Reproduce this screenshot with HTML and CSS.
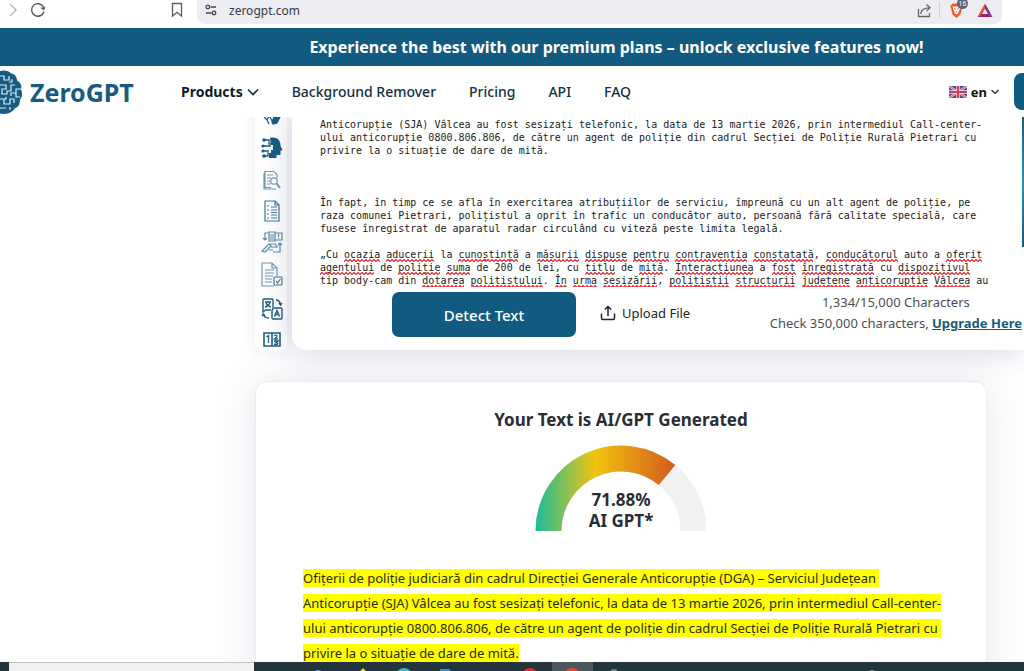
FILE: index.html
```html
<!DOCTYPE html>
<html lang="ro">
<head>
  <meta charset="utf-8">
  <title>ZeroGPT</title>
  <link rel="stylesheet" href="styles.css">
</head>
<body>
  <!-- browser toolbar -->
  <div class="toolbar">
    <button class="icon-btn forward" aria-label="Forward">
      <svg width="10" height="16" viewBox="0 0 10 16"><path d="M2 2l6 6-6 6" fill="none" stroke="#b5b5ba" stroke-width="1.4"/></svg>
    </button>
    <button class="icon-btn reload" aria-label="Reload">
      <svg width="16" height="16" viewBox="0 0 16 16"><path d="M13.500 5A6.300 6.300 0 1 0 14 9.500" fill="none" stroke="#5b5b60" stroke-width="1.4"/><path d="M15.500 4.500l-1.500 4-3.500-2.500z" fill="#5b5b60"/></svg>
    </button>
    <button class="icon-btn bookmark" aria-label="Bookmark">
      <svg width="12" height="16" viewBox="0 0 12 16"><path d="M1.500 1.500h9v12.500L6 10.300 1.500 14z" fill="none" stroke="#5b5b60" stroke-width="1.3"/></svg>
    </button>
    <div class="address">
      <svg width="12" height="12" viewBox="0 0 12 12" fill="none" stroke="#444449" stroke-width="1.3"><circle cx="2.800" cy="3" r="1.800"/><path d="M5.500 3H11M1 9h5.500"/><circle cx="9" cy="9" r="1.800"/></svg>
      <span class="url">zerogpt.com</span>
      <button class="icon-btn" aria-label="Share">
        <svg width="15" height="15" viewBox="0 0 15 15" fill="none" stroke="#66666d" stroke-width="1.3"><path d="M1.500 6v7.500h11V10M3.800 11c.2-4 3-6.200 8.700-6.200M9.500 1.500l3.500 3.300-3.500 3.300"/></svg>
      </button>
      <span class="divider"></span>
      <button class="icon-btn shield" aria-label="Shields">
        <svg width="19" height="18" viewBox="0 0 19 18"><path d="M3.500 2.500h8l2.200 2.700-.7 1.800-1.500 6.500-4 3.500-4-3.500L2 7l-.7-1.800z" fill="#ef5a29"/><path d="M3.500 5.500l2 .3 2-.5 2 .5 2-.3-1 3.500-1 1.500.3 1.300-2.300 1.700-2.300-1.700.3-1.300-1-1.500z" fill="#fff"/><path d="M5 7.500l2 .8M10 7.500l-2 .8M6.500 11h2" stroke="#ef5a29" stroke-width=".8"/></svg>
        <span class="badge">16</span>
      </button>
      <button class="icon-btn" aria-label="Rewards">
        <svg width="16" height="15" viewBox="0 0 16 15"><path d="M8 .5L.5 14 5 11l3-5.500z" fill="#e8462f"/><path d="M8 .5L15.500 14 11 11 8 5.500z" fill="#7d2d86"/><path d="M.5 14h15L11 11H5z" fill="#9c1f6b"/></svg>
      </button>
    </div>
  </div>

  <div class="promo">Experience the best with our premium plans – unlock exclusive features now!</div>

  <header class="header">
    <a class="logo" href="#">
      <svg width="23" height="44" viewBox="0 0 23 44"><path d="M0 1c5-1.500 9 0 11 2.500 4 0 6 4 6 7 4 2 5 6 4 9 2 4 1 8-1 10 0 5-2 8-5 8.500-2 4-8 7-15 5.500z" fill="#175c80"/><path d="M0 6h4v4h5V6M0 15h6v4H2v5h5v-3h4v-6h4M0 29h6v-2M4 29v5h6v-5h4v4M0 38h6M12 9v3h-3M21 19h-5v4h-5v3M16 23v4h4M10 37v3" fill="none" stroke="#d9edf6" stroke-width="1.200"/></svg>
      <span>ZeroGPT</span>
    </a>
    <nav class="nav">
      <a href="#" class="products">Products
        <svg width="12" height="8" viewBox="0 0 12 8"><path d="M1 1.500l5 5 5-5" fill="none" stroke="#12303f" stroke-width="1.600"/></svg>
      </a>
      <a href="#">Background Remover</a>
      <a href="#">Pricing</a>
      <a href="#">API</a>
      <a href="#">FAQ</a>
    </nav>
    <button class="lang">
      <svg class="flag" width="18" height="12" viewBox="0 0 18 12"><path d="M0 0h18v12H0z" fill="#4b4f9a"/><path d="M0 0l18 12M18 0L0 12" stroke="#f0dfe8" stroke-width="2"/><path d="M0 0l18 12M18 0L0 12" stroke="#d8556c" stroke-width="1"/><path d="M9 0v12M0 6h18" stroke="#f3e4ea" stroke-width="3.400"/><path d="M9 0v12M0 6h18" stroke="#d33c55" stroke-width="2"/></svg>
      <span>en</span>
      <svg width="8" height="6" viewBox="0 0 8 6"><path d="M.5 1L4 4.500 7.500 1" fill="none" stroke="#222" stroke-width="1.200"/></svg>
    </button>
    <button class="account" aria-label="Account"></button>
  </header>

  <main class="main">
    <section class="detector">
      <!-- tools rail -->
      <div class="rail">
        <svg width="22" height="22" viewBox="0 0 22 22" fill="none" stroke="#175c80" stroke-width="1.200"><path d="M3 11l3 3 2-4M9 11l2 4M6 14l2 4"/><path d="M13 11h6l-3 6-4 1-1-2z" fill="#175c80"/></svg>
        <svg width="22" height="22" viewBox="0 0 22 22"><path d="M9 1c7-2 11 3 10.500 8l2 4-2 1v4h-4v3H8v-5h2v-3h2V8h-2z" fill="#175c80"/><g fill="none" stroke="#175c80" stroke-width="1.300"><path d="M4 3h4v4h3M3 9h7M3 14h5M4 19h3v-4"/></g><g fill="#175c80"><circle cx="3" cy="3" r="1.800"/><circle cx="2" cy="9" r="1.600"/><circle cx="2" cy="14" r="1.600"/><circle cx="3" cy="19" r="1.800"/></g></svg>
        <svg width="22" height="22" viewBox="0 0 22 22" fill="none" stroke="#6f9cb2" stroke-width="1.200"><path d="M10 18.500H4v-16h9l3 3v3M6 6h6M6 9h4M6 12h4M6 15h4M3 4v16h12"/><circle cx="13" cy="12" r="3.200"/><path d="M15.500 14.500L19 19" stroke-width="2"/></svg>
        <svg width="22" height="22" viewBox="0 0 22 22" fill="none" stroke="#3f7896" stroke-width="1.200"><path d="M4 1h10l4 4v16H4z"/><path d="M14 1v4h4M6 6h2M6 10h2M6 14h2M6 18h2"/><path d="M10 7h6M10 10h6M10 12.500h6M10 15h6M10 18h6"/></svg>
        <svg width="22" height="22" viewBox="0 0 22 22" fill="none" stroke="#5a8aa4" stroke-width="1.200"><path d="M4 9V2h3M2 7l2 2 2-2M8 1h6v9H8zM9 4h4M9 6h4M9 8h4M14 2h7v7h-7M17.500 3v3M17.500 7v1M19 12v9h-7M17 14l2-2 2 2M1 20l7-7 2 2-6 6zM8 13h6l2 3h-6M8 19h4"/></svg>
        <svg width="22" height="26" viewBox="0 0 22 26" fill="none" stroke="#6f9cb2" stroke-width="1.200"><path d="M13 24H1V1h10l5 5v8M11 1v5h5M4 8h9M4 11h9M4 14h8M4 17h7M4 20h7"/><rect x="13" y="15" width="8" height="8" rx="1" stroke="#3f7896"/><path d="M15 19l1.500 2 3-4" stroke="#3f7896"/></svg>
        <svg width="22" height="22" viewBox="0 0 22 22" fill="none" stroke="#245f7f" stroke-width="1.400"><path d="M10 12H5l-3 2V2q0-1 1-1h8q1 0 1 1v7M4 4h6M7 3v1M9 4q-1 4-5 5M5 5q1 3 5 4"/><path d="M12 10h8q1 0 1 1v9q0 1-1 1h-8q-1 0-1-1v-7zM13.500 18.500l2.500-6 2.500 6M14.500 16.500h3M15 2q4 0 4.500 5M18 5l1.500 2L21 5M8 20q-5 0-5.500-4M1 18l1.500-2L4 18"/></svg>
        <svg width="22" height="22" viewBox="0 0 22 22" fill="none" stroke="#245f7f" stroke-width="1.300"><path d="M3 4h16v13H3zM11 4v13" stroke-width="1.600"/><path d="M5.500 8l2-1.500V14M13 6.500q3.500-1 3 1L13.500 10H17M13 12h4l-2 1.500q3 .5 1 2h-3"/></svg>
      </div>

      <div class="card">
        <div class="editor">
          <textarea class="text" id="text" aria-label="Text" wrap="off" spellcheck="false">Anticorupție (SJA) Vâlcea au fost sesizați telefonic, la data de 13 martie 2026, prin intermediul Call-center-
ului anticorupție 0800.806.806, de către un agent de poliție din cadrul Secției de Poliție Rurală Pietrari cu
privire la o situație de dare de mită.



În fapt, în timp ce se afla în exercitarea atribuțiilor de serviciu, împreună cu un alt agent de poliție, pe
raza comunei Pietrari, polițistul a oprit în trafic un conducător auto, persoană fără calitate specială, care
fusese înregistrat de aparatul radar circulând cu viteză peste limita legală.

„Cu ocazia aducerii la cunoștință a măsurii dispuse pentru contravenția constatată, conducătorul auto a oferit
agentului de poliție suma de 200 de lei, cu titlu de mită. Interacțiunea a fost înregistrată cu dispozitivul
tip body-cam din dotarea polițistului. În urma sesizării, polițiștii structurii județene anticorupție Vâlcea au</textarea>
          <svg class="squiggles" id="squiggles" aria-hidden="true">
            <defs>
              <pattern id="wave" width="4" height="3" patternUnits="userSpaceOnUse"><path d="M-1 1.500L0 2.500 2 .5l2 2 1-1" fill="none" stroke="#e0262e" stroke-width="1.200"/></pattern>
            </defs>
          </svg>
          <div class="side-strip"></div>
        </div>
        <div class="actions">
          <button class="detect">Detect Text</button>
          <button class="upload">
            <svg width="16" height="16" viewBox="0 0 16 16" fill="none" stroke="#222" stroke-width="1.500"><path d="M1.500 8.500V13q0 1.500 1.500 1.500h10q1.500 0 1.500-1.500V8.500M8 11V1.500M4.800 4.500L8 1.500l3.200 3"/></svg>
            Upload File
          </button>
          <div class="limits">
            <div>1,334/15,000 Characters</div>
            <div>Check 350,000 characters, <a href="#">Upgrade Here</a></div>
          </div>
        </div>
      </div>
    </section>

    <section class="result">
      <h2>Your Text is AI/GPT Generated</h2>
      <div class="gauge">
        <svg width="172" height="86" viewBox="0 0 172 86">
          <defs>
            <linearGradient id="heat" gradientUnits="userSpaceOnUse" x1="0" y1="0" x2="140" y2="0">
              <stop offset="0" stop-color="#1abc9c"/>
              <stop offset=".43" stop-color="#f1c40f"/>
              <stop offset="1" stop-color="#d35a1c"/>
            </linearGradient>
          </defs>
          <path d="M13.500 86a72.500 72.500 0 0 1 145 0" fill="none" stroke="#f1f1f1" stroke-width="26"/>
          <path d="M13.500 86A72.500 72.500 0 0 1 132 30" fill="none" stroke="url(#heat)" stroke-width="26"/>
        </svg>
        <div class="gauge-label">71.88%<br>AI GPT*</div>
      </div>
      <p class="passage"><mark>Ofițerii de poliție judiciară din cadrul Direcției Generale Anticorupție (DGA) – Serviciul Județean 
Anticorupție (SJA) Vâlcea au fost sesizați telefonic, la data de 13 martie 2026, prin intermediul Call-center-
ului anticorupție 0800.806.806, de către un agent de poliție din cadrul Secției de Poliție Rurală Pietrari cu 
privire la o situație de dare de mită.</mark></p>
    </section>
  </main>

  <!-- desktop taskbar -->
  <div class="taskbar">
    <div class="status"></div>
    <svg class="apps" width="660" height="9" viewBox="0 0 660 9">
      <path d="M298 0h41v9h-41z" fill="#4b575e"/>
      <circle cx="64" cy="12" r="4" fill="#7d9bd6"/>
      <path d="M109 6l3 3h-6z" fill="#e5cf3a"/>
      <circle cx="150" cy="15" r="9" fill="#35b9cf"/>
      <path d="M186 7h10v2h-10z" fill="#2d8fdc"/>
      <circle cx="276" cy="14" r="8" fill="#d92d35"/>
      <circle cx="318" cy="14" r="8" fill="#e9472a"/>
      <circle cx="360" cy="11" r="4" fill="#77838a"/>
      <circle cx="618" cy="12" r="4" fill="#8b959b"/>
    </svg>
  </div>
  <script src="script.js"></script>
</body>
</html>
```
FILE: styles.css
```css
* {
  box-sizing: border-box;
}

body {
  margin: 0;
  height: 100vh;
  display: flex;
  flex-direction: column;
  overflow: hidden;
  background: #fff;
  color: #212529;
  font-family: "Noto Sans", sans-serif;
  font-size: 13px;
}

button {
  font: inherit;
  color: inherit;
  background: none;
  border: none;
  padding: 0;
  cursor: pointer;
}

svg {
  display: block;
  flex: none;
}

/* browser toolbar */
.toolbar {
  flex: none;
  display: flex;
  align-items: flex-start;
  height: 28px;
  padding: 0 22px 0 8px;
}

.icon-btn {
  position: relative;
  flex: none;
}

.toolbar > .icon-btn {
  margin-top: 2px;
}

.reload {
  margin-left: 12px;
}

.bookmark {
  margin-left: 125px;
}

.address {
  flex: 1;
  display: flex;
  align-items: center;
  height: 24px;
  margin-left: 14px;
  padding: 0 9px 4px 8px;
  background: #ececf3;
  border-radius: 0 0 8px 8px;
}

.url {
  flex: 1;
  margin-left: 12px;
  font-size: 12px;
  color: #3a3a40;
}

.divider {
  width: 1px;
  height: 16px;
  margin: 0 9px 0 7px;
  background: #cfcfd6;
}

.shield {
  margin-right: 9px;
}

.badge {
  position: absolute;
  top: -3px;
  right: 0;
  width: 11px;
  height: 11px;
  border-radius: 50%;
  background: #5d6070;
  color: #fff;
  font-size: 7px;
  line-height: 11px;
}

/* site header */
.promo {
  flex: none;
  height: 38px;
  line-height: 38px;
  padding-left: 209px;
  text-align: center;
  background: #125b80;
  color: #fff;
  font-size: 16px;
  font-weight: 700;
}

.header {
  flex: none;
  display: flex;
  align-items: center;
  height: 51px;
  overflow: hidden;
}

.header a {
  color: #12303f;
  text-decoration: none;
}

.header .logo {
  display: flex;
  align-items: center;
  gap: 7px;
  width: 181px;
  color: #175c80;
  font-size: 25px;
  font-weight: 700;
}

.nav {
  display: flex;
  gap: 33px;
  font-size: 14px;
  font-weight: 500;
}

.nav .products {
  display: flex;
  align-items: center;
  gap: 4px;
  color: #0b1d27;
  font-weight: 700;
}

.lang {
  display: flex;
  align-items: center;
  gap: 4px;
  margin-left: auto;
  font-weight: 700;
  color: #111;
}

.account {
  width: 50px;
  height: 37px;
  margin-left: 15px;
  margin-right: -40px;
  background: #125b80;
  border-radius: 8px;
}

/* page content */
.main {
  flex: 1;
  min-height: 0;
  overflow: hidden;
  padding-left: 255px;
}

.detector {
  display: flex;
  gap: 5px;
}

.rail {
  width: 32px;
  height: 245px;
  display: flex;
  flex-direction: column;
  align-items: center;
  justify-content: space-between;
  margin-top: -11px;
  padding-left: 2px;
  border-radius: 0 0 8px 8px;
  box-shadow: 0 0 16px rgba(40, 50, 110, .1);
}

.card {
  flex: 1;
  min-width: 0;
  height: 233px;
  background: #fff;
  border-radius: 0 0 0 14px;
  box-shadow: 0 0 32px rgba(40, 50, 110, .22);
}

.editor {
  position: relative;
  display: flex;
  height: 170px;
  padding-left: 28px;
}

.text {
  flex: 1;
  min-width: 0;
  padding: 1px 0 0;
  border: none;
  outline: none;
  resize: none;
  overflow: hidden;
  background: none;
  color: #222;
  font-family: "DejaVu Sans Mono", monospace;
  font-size: 10px;
  line-height: 13px;
}

.squiggles {
  position: absolute;
  left: 28px;
  top: 0;
  width: 100%;
  height: 100%;
  pointer-events: none;
}

.side-strip {
  width: 2px;
  height: 130px;
  background: linear-gradient(#155e83, #2f8fae 50%, #125b80);
}

.actions {
  display: flex;
  align-items: center;
  gap: 24px;
  padding: 5px 2px 0 100px;
}

.detect {
  width: 184px;
  height: 45px;
  background: #125b80;
  border-radius: 7px;
  color: #fff;
  font-size: 15px;
  font-weight: 500;
}

.upload {
  display: flex;
  align-items: center;
  gap: 6px;
  padding-bottom: 3px;
}

.limits {
  margin-left: auto;
  padding-bottom: 3px;
  color: #4b4f56;
  line-height: 21px;
  text-align: center;
}

.limits a {
  color: #175c80;
  font-weight: 700;
}

/* result */
.result {
  height: 320px;
  margin: 30px 37px 0 0;
  padding: 26px 47px 0;
  border: 1px solid #ebebf2;
  border-radius: 12px;
  background: #fff;
  box-shadow: 0 0 40px rgba(40, 50, 110, .12);
}

.result h2 {
  margin: 0;
  color: #2b2d36;
  font-size: 17px;
  line-height: 24px;
  text-align: center;
}

.gauge {
  position: relative;
  width: 172px;
  margin: 13px auto 0;
}

.gauge-label {
  position: absolute;
  left: 0;
  right: 0;
  bottom: 0;
  color: #2b2d36;
  font-size: 17px;
  font-weight: 700;
  line-height: 21px;
  text-align: center;
}

.passage {
  margin: 35px 0 0;
  line-height: 25px;
  white-space: pre;
}

.passage mark {
  background: #ff0;
  color: #2b2b12;
}

/* taskbar */
.taskbar {
  position: relative;
  flex: none;
  display: flex;
  height: 9px;
  padding-left: 9px;
  background: #24343d;
}

.status {
  width: 245px;
  background: #f1f1f1;
  border-top: 1px solid #c4c4c4;
}
```
FILE: script.js
```js
// words flagged by the spell checker, by line of the text
const flagged = {
  10: ["ocazia", "aducerii", "cunoștință", "măsurii", "dispuse", "pentru", "contravenția", "constatată", "conducătorul", "oferit"],
  11: ["agentului", "poliție", "suma", "titlu", "mită", "Interacțiunea", "fost", "înregistrată", "dispozitivul"],
  12: ["dotarea", "polițistului", "În", "urma", "sesizării", "polițiștii", "structurii", "județene", "anticorupție", "Vâlcea"]
}

const text = document.getElementById("text")
const squiggles = document.getElementById("squiggles")
const lines = text.value.split("\n")

const ctx = document.createElement("canvas").getContext("2d")
ctx.font = getComputedStyle(text).font
const charWidth = ctx.measureText("0").width

for (const row in flagged) {
  for (const word of flagged[row]) {
    const group = document.createElementNS("http://www.w3.org/2000/svg", "g")
    const rect = document.createElementNS("http://www.w3.org/2000/svg", "rect")
    const y = 1 + row * 13 + 11
    group.setAttribute("transform", "translate(" + Math.round(lines[row].indexOf(word) * charWidth) + " " + y + ")")
    rect.setAttribute("width", Math.round(word.length * charWidth))
    rect.setAttribute("height", 3)
    rect.setAttribute("fill", "url(#wave)")
    group.appendChild(rect)
    squiggles.appendChild(group)
  }
}
```
